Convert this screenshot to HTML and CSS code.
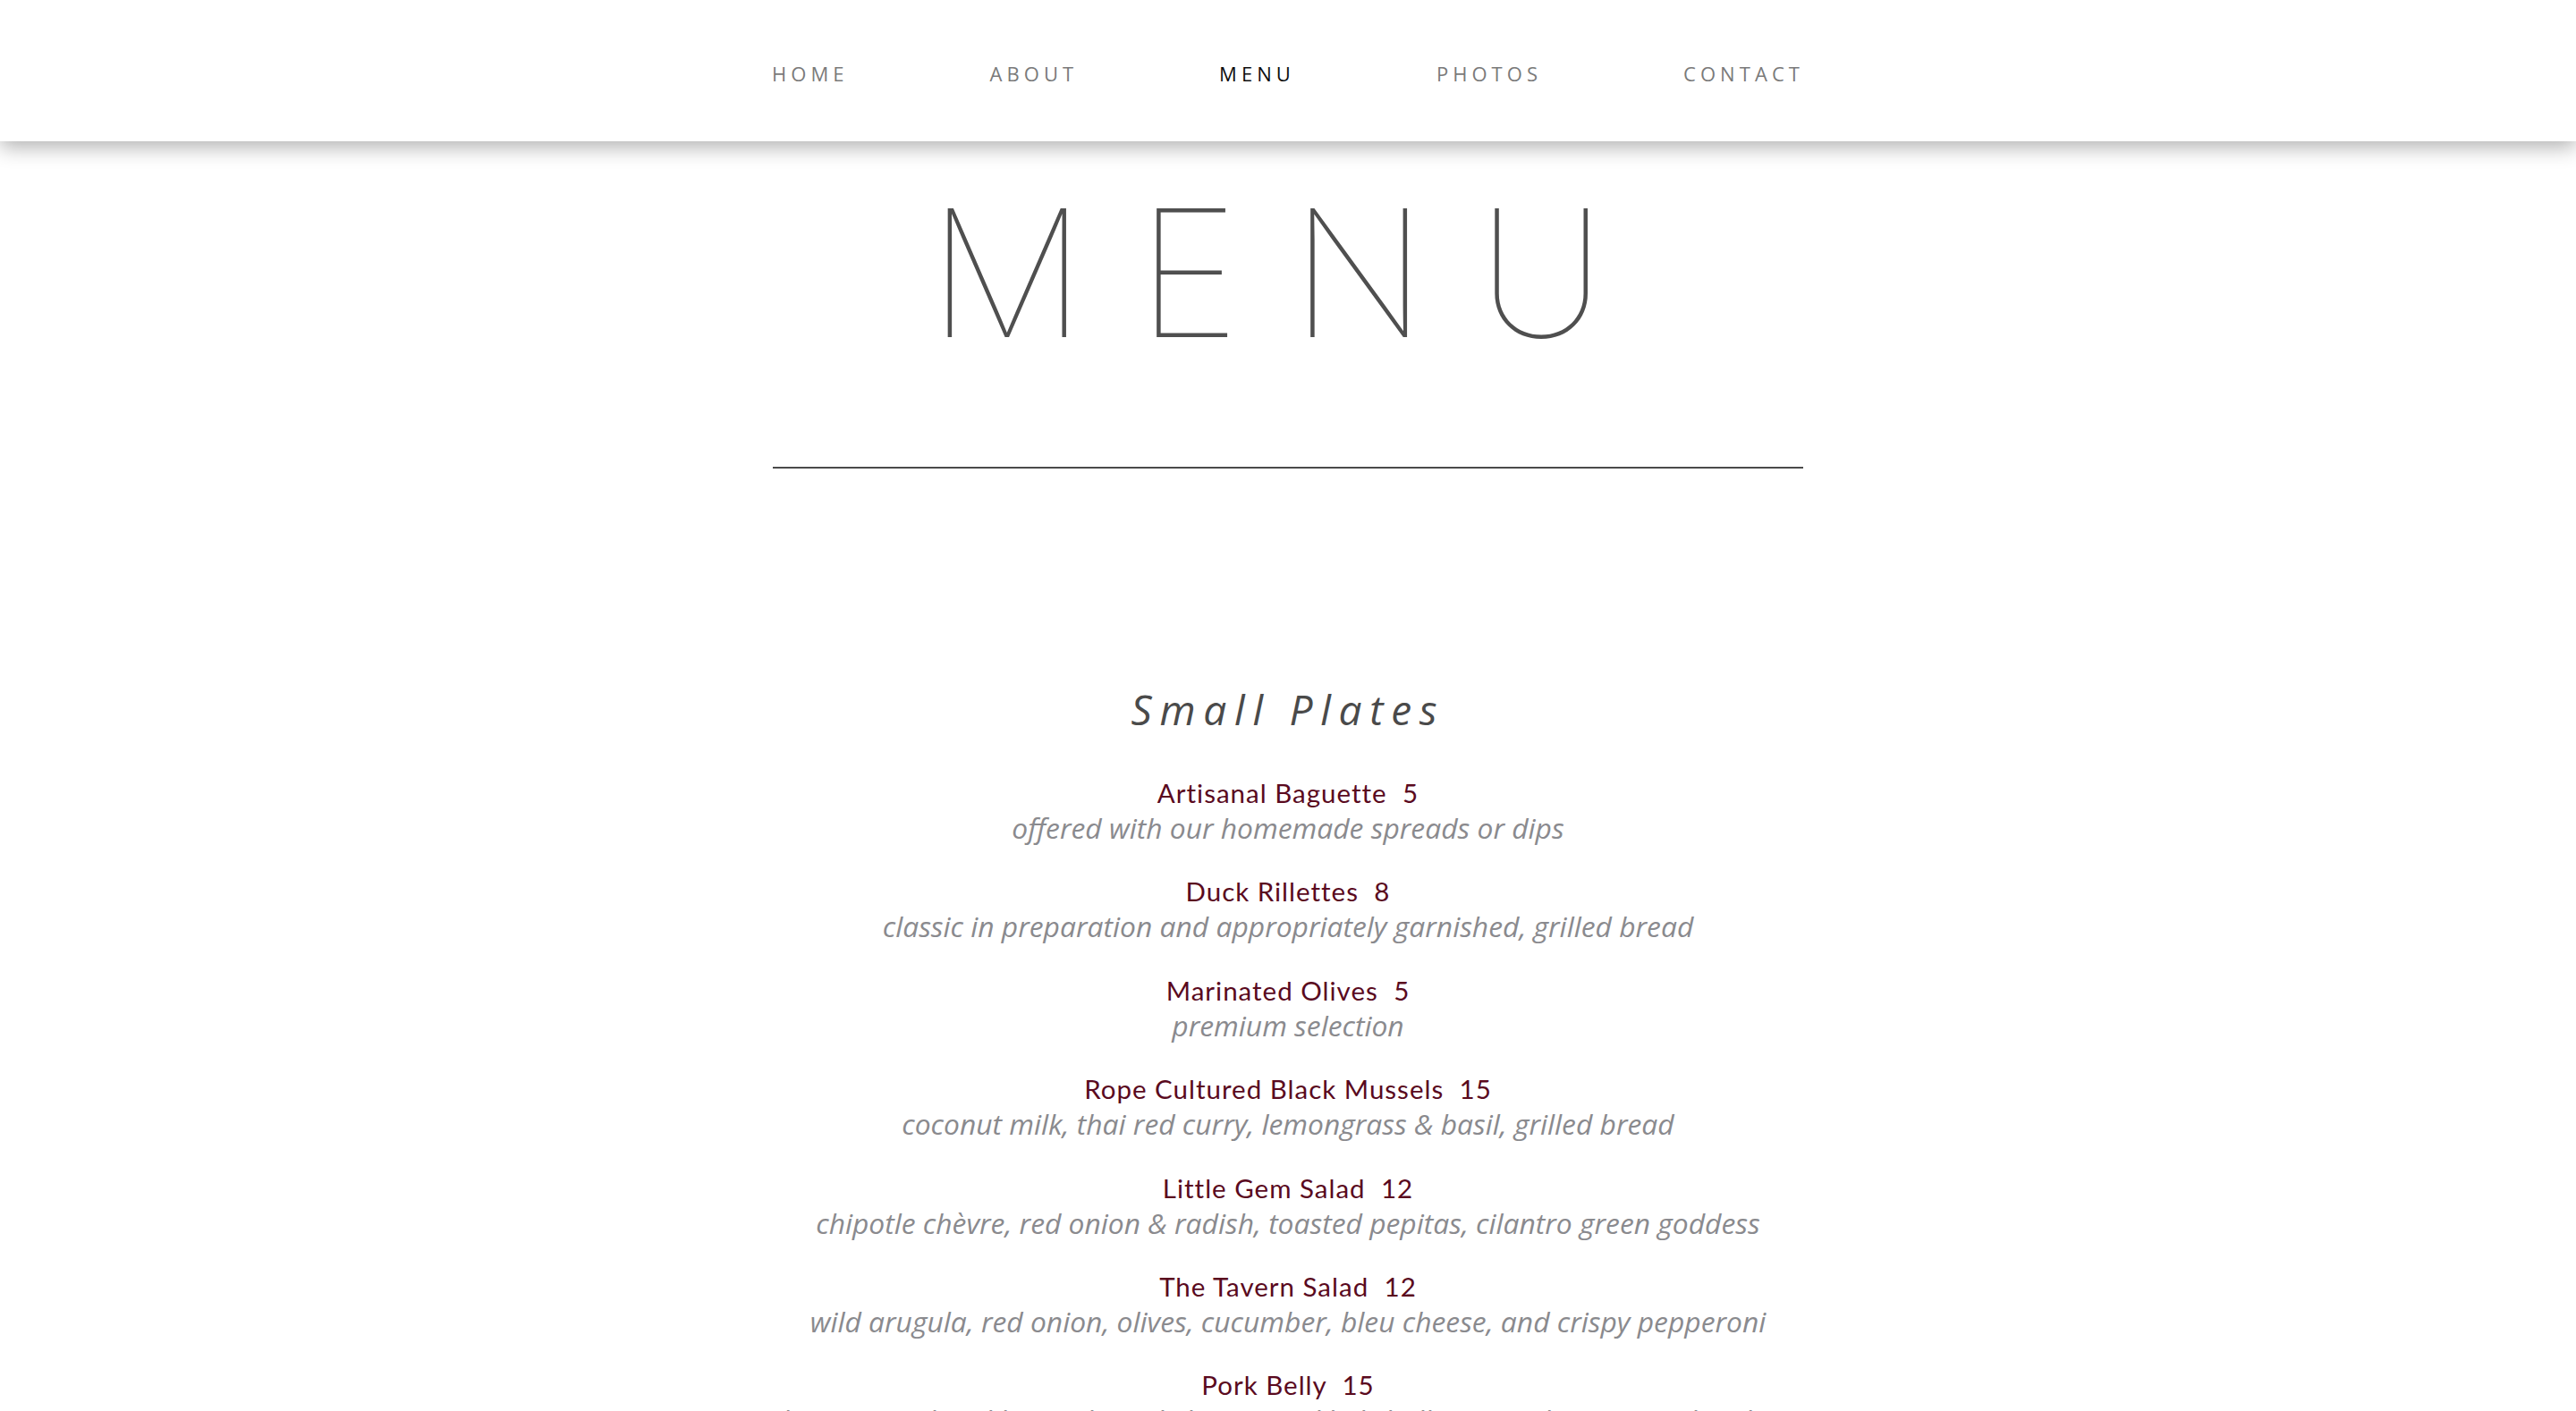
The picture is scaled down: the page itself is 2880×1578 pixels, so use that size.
FILE: index.html
```html
<!DOCTYPE html>
<html lang="en">
<head>
<meta charset="utf-8">
<title>Menu</title>
<link rel="stylesheet" href="styles.css">
</head>
<body>
<header class="site-header">
  <nav class="nav">
    <a class="nav-link" href="#">HOME</a>
    <a class="nav-link" href="#">ABOUT</a>
    <a class="nav-link active" href="#">MENU</a>
    <a class="nav-link" href="#">PHOTOS</a>
    <a class="nav-link" href="#">CONTACT</a>
  </nav>
</header>
<main class="page">
  <h1 class="page-title"><span>MENU</span></h1>
  <hr class="divider">
  <section class="menu-section">
    <h2 class="section-title">Small Plates</h2>
    <div class="items">
      <div class="item">
        <div class="item-name">Artisanal Baguette <span class="price">5</span></div>
        <div class="item-desc">offered with our homemade spreads or dips</div>
      </div>
      <div class="item">
        <div class="item-name">Duck Rillettes <span class="price">8</span></div>
        <div class="item-desc">classic in preparation and appropriately garnished, grilled bread</div>
      </div>
      <div class="item">
        <div class="item-name">Marinated Olives <span class="price">5</span></div>
        <div class="item-desc">premium selection</div>
      </div>
      <div class="item">
        <div class="item-name">Rope Cultured Black Mussels <span class="price">15</span></div>
        <div class="item-desc">coconut milk, thai red curry, lemongrass &amp; basil, grilled bread</div>
      </div>
      <div class="item">
        <div class="item-name">Little Gem Salad <span class="price">12</span></div>
        <div class="item-desc">chipotle chèvre, red onion &amp; radish, toasted pepitas, cilantro green goddess</div>
      </div>
      <div class="item">
        <div class="item-name">The Tavern Salad <span class="price">12</span></div>
        <div class="item-desc">wild arugula, red onion, olives, cucumber, bleu cheese, and crispy pepperoni</div>
      </div>
      <div class="item">
        <div class="item-name">Pork Belly <span class="price">15</span></div>
        <div class="item-desc">house cured and braised, apple butter, pickled shallot, spiced pecans, cider glaze</div>
      </div>
    </div>
  </section>
</main>
</body>
</html>
```
FILE: styles.css
```css
html, body {
  margin: 0;
  padding: 0;
  background: #ffffff;
}
body {
  font-family: "Open Sans", "Liberation Sans", sans-serif;
  color: #4a4a4a;
}

.site-header {
  position: relative;
  z-index: 2;
  height: 158px;
  background: #ffffff;
  box-shadow: 0 6px 22px rgba(0, 0, 0, 0.32);
  display: flex;
  justify-content: center;
}
.nav {
  width: 1154px;
  display: flex;
  justify-content: space-between;
  align-items: center;
  padding-top: 6px;
}
.nav-link {
  font-family: "Open Sans", sans-serif;
  font-size: 22px;
  line-height: 30px;
  letter-spacing: 0.23em;
  color: #7a7a7a;
  text-decoration: none;
}
.nav-link.active {
  color: #0d0d0d;
}

.page {
  width: 1152px;
  margin: 0 auto;
  padding-top: 49px;
  display: flex;
  flex-direction: column;
  align-items: center;
}
.page-title {
  margin: 0;
  font-family: "Inter", "Roboto", sans-serif;
  font-weight: 100;
  font-size: 198px;
  line-height: 196px;
  letter-spacing: 0.285em;
  color: #4f4f4f;
  text-align: center;
}
.page-title span {
  margin-right: -0.04em;
}
.divider {
  align-self: stretch;
  margin: 119px 0 0 0;
  border: 0;
  height: 2px;
  background: #4a4a4a;
}

.menu-section {
  margin-top: 242px;
  display: flex;
  flex-direction: column;
  align-items: center;
}
.section-title {
  margin: 0;
  font-family: "Open Sans", sans-serif;
  font-style: italic;
  font-weight: 400;
  font-size: 46px;
  line-height: 55px;
  letter-spacing: 0.19em;
  color: #4a4a4a;
}
.items {
  margin-top: 47px;
  display: flex;
  flex-direction: column;
  align-items: center;
  gap: 32.4px;
}
.item {
  display: flex;
  flex-direction: column;
  align-items: center;
  text-align: center;
}
.item-name {
  font-family: "Lato", "Open Sans", sans-serif;
  font-weight: 400;
  font-size: 29.5px;
  line-height: 38px;
  letter-spacing: 1px;
  color: #5a0a1e;
}
.price {
  margin-left: 0.3em;
}
.item-desc {
  font-family: "Open Sans", sans-serif;
  font-style: italic;
  font-size: 31.8px;
  line-height: 40px;
  color: #8a8a8e;
  white-space: nowrap;
}
```
